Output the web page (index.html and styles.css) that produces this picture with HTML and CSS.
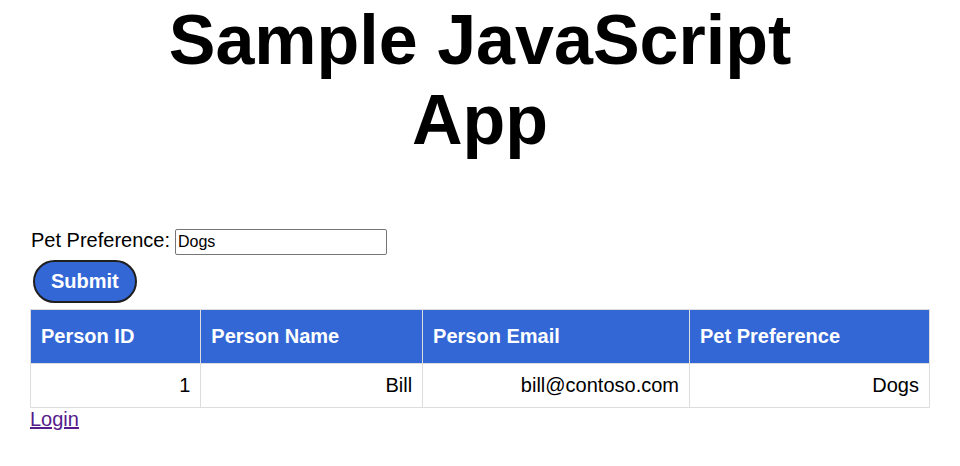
FILE: index.html
```html
<!DOCTYPE html>
<html lang="en">
<head>
<meta charset="utf-8">
<title>Sample JavaScript App</title>
<link rel="stylesheet" href="styles.css">
</head>
<body>
<div class="page">
  <h1 class="title">Sample JavaScript App</h1>
  <form class="pet-form">
    <div class="field">
      <label class="field-label" for="pet">Pet Preference:</label>
      <input class="field-input" id="pet" type="text" value="Dogs">
    </div>
    <button class="submit" type="button">Submit</button>
  </form>
  <table class="people">
    <thead>
      <tr>
        <th>Person ID</th>
        <th>Person Name</th>
        <th>Person Email</th>
        <th>Pet Preference</th>
      </tr>
    </thead>
    <tbody>
      <tr>
        <td>1</td>
        <td>Bill</td>
        <td>bill@contoso.com</td>
        <td>Dogs</td>
      </tr>
    </tbody>
  </table>
  <a class="login" href="#login">Login</a>
</div>
</body>
</html>
```
FILE: styles.css
```css
html, body {
  margin: 0;
  padding: 0;
  background: #ffffff;
}

body {
  font-family: "Liberation Sans", Arial, sans-serif;
  font-size: 20px;
  color: #000000;
}

.page {
  max-width: 900px;
  margin: 0 auto;
}

.title {
  max-width: 700px;
  margin: 0 auto 69px;
  font-size: 70px;
  font-weight: bold;
  text-align: center;
}

.pet-form {
  display: flex;
  flex-direction: column;
  align-items: flex-start;
  gap: 5px;
  margin: 0 0 6px;
}

.field {
  display: flex;
  align-items: baseline;
  gap: 5px;
  padding-left: 1px;
}

.field-label {
  font-size: 20px;
}

.field-input {
  box-sizing: border-box;
  width: 212px;
  height: 26px;
  padding: 2px 2px;
  border: 1px solid #767676;
  border-radius: 2px;
  font-family: "Liberation Sans", Arial, sans-serif;
  font-size: 16px;
  color: #000000;
  background: #ffffff;
}

.submit {
  margin-left: 3px;
  padding: 9px 16px;
  border: 2px solid #1f1f1f;
  border-radius: 22px;
  background: #3367d6;
  color: #ffffff;
  font-family: "Liberation Sans", Arial, sans-serif;
  font-size: 20px;
  font-weight: bold;
  line-height: 21px;
  cursor: pointer;
}

.people {
  width: 100%;
  border-collapse: collapse;
}

.people th,
.people td {
  border: 1px solid #dddddd;
}

.people th {
  padding: 15px 10px;
  background: #3367d6;
  color: #ffffff;
  font-weight: bold;
  text-align: left;
}

.people td {
  padding: 10px;
  text-align: right;
}

.login {
  color: #551a8b;
  text-decoration: underline;
}
```
